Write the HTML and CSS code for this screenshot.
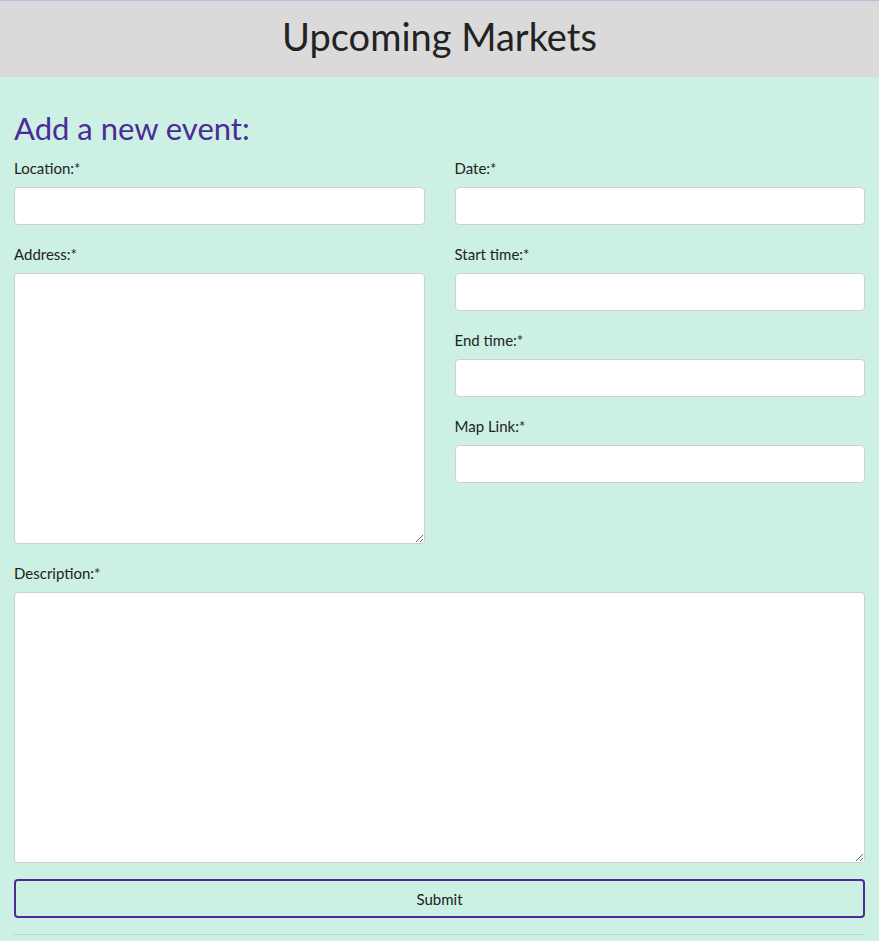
FILE: index.html
```html
<!DOCTYPE html>
<html lang="en">
<head>
<meta charset="utf-8">
<title>Upcoming Markets</title>
<link rel="stylesheet" href="styles.css">
</head>
<body>
<header class="site-header">
  <h1 class="site-title">Upcoming Markets</h1>
</header>
<main class="page">
  <h2 class="form-title">Add a new event:</h2>
  <form class="event-form">
    <div class="columns">
      <div class="col">
        <div class="field">
          <label class="label" for="location">Location:*</label>
          <input class="input" id="location" type="text">
        </div>
        <div class="field">
          <label class="label" for="address">Address:*</label>
          <textarea class="input area-address" id="address"></textarea>
        </div>
      </div>
      <div class="col">
        <div class="field">
          <label class="label" for="date">Date:*</label>
          <input class="input" id="date" type="text">
        </div>
        <div class="field">
          <label class="label" for="start">Start time:*</label>
          <input class="input" id="start" type="text">
        </div>
        <div class="field">
          <label class="label" for="end">End time:*</label>
          <input class="input" id="end" type="text">
        </div>
        <div class="field">
          <label class="label" for="map">Map Link:*</label>
          <input class="input" id="map" type="text">
        </div>
      </div>
    </div>
    <div class="field">
      <label class="label" for="desc">Description:*</label>
      <textarea class="input area-desc" id="desc"></textarea>
    </div>
    <button class="submit" type="button">Submit</button>
  </form>
  <hr class="rule">
</main>
</body>
</html>
```
FILE: styles.css
```css
* { box-sizing: border-box; }
html, body { margin: 0; padding: 0; }
body {
  background: #cdf0e4;
  font-family: Lato, "Open Sans", sans-serif;
  color: #222;
}
.site-header {
  background: #dadada;
  border-top: 1px solid #b6bde0;
  height: 77px;
  padding-bottom: 6px;
  display: flex;
  align-items: center;
  justify-content: center;
}
.site-title {
  margin: 0;
  font-weight: 400;
  font-size: 38px;
  line-height: 46px;
  color: #222;
}
.page {
  padding: 31px 14px 0;
}
.form-title {
  margin: 0 0 9px;
  font-weight: 400;
  font-size: 31px;
  line-height: 40px;
  color: #4b2b98;
}
.event-form {
  display: flex;
  flex-direction: column;
  gap: 18px;
}
.columns {
  display: grid;
  grid-template-columns: 1fr 1fr;
  column-gap: 30px;
}
.col {
  display: flex;
  flex-direction: column;
  gap: 18px;
}
.field {
  display: flex;
  flex-direction: column;
  gap: 8px;
}
.label {
  font-size: 15px;
  line-height: 20px;
  margin-top: 1px;
  margin-bottom: 1px;
}
.input {
  display: block;
  width: 100%;
  height: 38px;
  border: 1px solid #cfcfcf;
  border-radius: 4px;
  background: #fff;
  font: inherit;
  margin: 0;
}
.area-address { height: 271px; resize: vertical; }
.area-desc { height: 271px; resize: vertical; }
.submit {
  height: 39px;
  width: 100%;
  margin-top: -2px;
  background: transparent;
  border: 2px solid #4b2b98;
  border-radius: 4px;
  font-family: inherit;
  font-size: 15px;
  color: #222;
}
.rule {
  margin: 16px 0 0;
  border: 0;
  border-top: 1px solid #b5d9cc;
}
```
